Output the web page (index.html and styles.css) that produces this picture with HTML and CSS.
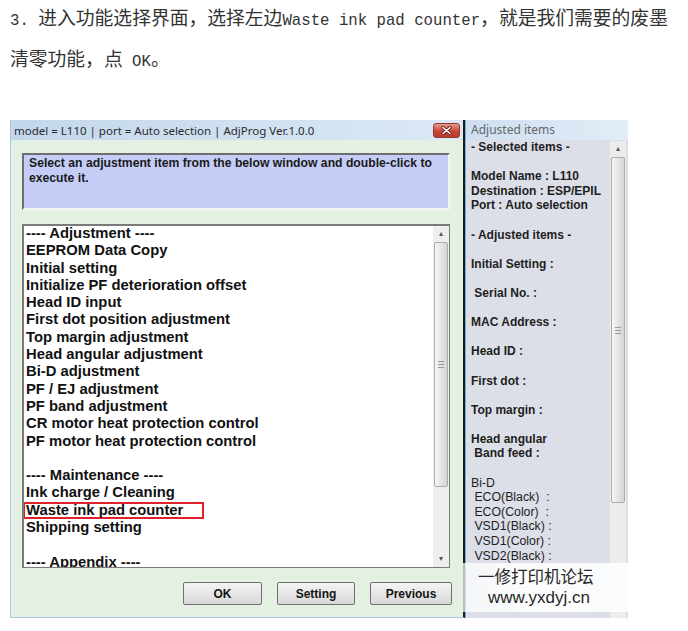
FILE: index.html
```html
<!DOCTYPE html>
<html lang="zh-CN">
<head>
    <meta charset="UTF-8">
    <meta name="viewport" content="width=device-width, initial-scale=1.0">
    <title>废墨清零</title>
    <link rel="stylesheet" href="styles.css">
</head>
<body>
    <p class="intro"><span class="mono">3. </span>进入功能选择界面，选择左边<span class="mono">Waste ink pad counter</span>，就是我们需要的废墨清零功能，点<span class="mono"> OK</span>。</p>

    <div class="shot">
        <div class="window">
            <div class="titlebar">
                <span>model = L110 | port = Auto selection | AdjProg Ver.1.0.0</span>
                <span class="close">
                    <svg width="11" height="9" viewBox="0 0 11 9"><path d="M2 1.5 L9 7.5 M9 1.5 L2 7.5" stroke="#6b1d14" stroke-width="3.2" stroke-linecap="round"/><path d="M2 1.5 L9 7.5 M9 1.5 L2 7.5" stroke="#fff" stroke-width="1.6" stroke-linecap="round"/></svg>
                </span>
            </div>
            <div class="win-body">
                <div class="hint">Select an adjustment item from the below window and double-click to execute it.</div>

                <div class="listbox">
                    <ul class="items">
                        <li>---- Adjustment ----</li>
                        <li>EEPROM Data Copy</li>
                        <li>Initial setting</li>
                        <li>Initialize PF deterioration offset</li>
                        <li>Head ID input</li>
                        <li>First dot position adjustment</li>
                        <li>Top margin adjustment</li>
                        <li>Head angular adjustment</li>
                        <li>Bi-D adjustment</li>
                        <li>PF / EJ adjustment</li>
                        <li>PF band adjustment</li>
                        <li>CR motor heat protection control</li>
                        <li>PF motor heat protection control</li>
                        <li>&nbsp;</li>
                        <li>---- Maintenance ----</li>
                        <li>Ink charge / Cleaning</li>
                        <li class="marked">Waste ink pad counter</li>
                        <li>Shipping setting</li>
                        <li>&nbsp;</li>
                        <li>---- Appendix ----</li>
                    </ul>
                    <div class="vscroll">
                        <div class="arrow">&#9652;</div>
                        <div class="thumb list-thumb"><span class="grip"></span></div>
                        <div class="track"></div>
                        <div class="arrow">&#9662;</div>
                    </div>
                </div>

                <div class="buttons">
                    <button class="btn btn-ok">OK</button>
                    <button class="btn btn-setting">Setting</button>
                    <button class="btn btn-prev">Previous</button>
                </div>
            </div>
        </div>

        <div class="side">
            <div class="side-title">Adjusted items</div>
            <div class="side-body">
<pre class="side-text">- Selected items -

Model Name : L110
Destination : ESP/EPIL
Port : Auto selection

- Adjusted items -

Initial Setting :

 Serial No. :

MAC Address :

Head ID :

First dot :

Top margin :

Head angular
 Band feed :

<span class="thin">Bi-D
 ECO(Black)  :
 ECO(Color)  :
 VSD1(Black) :
 VSD1(Color) :
 VSD2(Black) :</span></pre>
                <div class="vscroll side-scroll">
                    <div class="arrow">&#9652;</div>
                    <div class="thumb side-thumb"><span class="grip"></span></div>
                    <div class="track"></div>
                </div>
            </div>
            <div class="watermark">
                <div class="wm-name">一修打印机论坛</div>
                <div class="wm-url">www.yxdyj.cn</div>
            </div>
        </div>
    </div>
</body>
</html>
```

FILE: styles.css
```css
body { margin: 0; background: #fff; font-family: "Liberation Sans", Arial, sans-serif; }

.intro { margin: -4px 8px 0 10px; font: 18.8px/41px "Noto Sans CJK SC", sans-serif; color: #333; }
.mono { font-family: "Liberation Mono", monospace; font-size: 15.7px; line-height: 1; }

.shot { display: flex; margin: 42px 0 0 10px; width: 618px; height: 498px; }

/* left dialog */
.window { width: 452px; display: flex; flex-direction: column; background: #e3f0e2; border-left: 1px solid #a9c6e2; border-bottom: 1px solid #a9c6e2; border-right: 2px solid #1c1c1c; }
.titlebar { height: 20px; display: flex; align-items: center; justify-content: space-between; padding: 0 3px 0 3px; background: linear-gradient(to right, #c3d7ec, #dce9f5); font: 11.5px "Noto Sans", sans-serif; color: #2b2b2b; }
.close { width: 25px; height: 13px; display: flex; align-items: center; justify-content: center; border: 1px solid #8e3a30; border-radius: 3px; background: linear-gradient(#e49a8c, #c9473a 55%, #b8382c); }

.win-body { padding: 13px 0 0 11px; }
.hint { width: 428px; height: 57px; box-sizing: border-box; padding: 1px 5px; border: 2px solid; border-color: #6e6e6e #f3f3f3 #f3f3f3 #6e6e6e; background: #c5cdf6; font-weight: bold; font-size: 12.2px; line-height: 15px; color: #1a1a1a; }

.listbox { width: 428px; height: 344px; box-sizing: border-box; margin-top: 14px; display: flex; background: #fff; border: 1px solid #7a7a7a; border-top-width: 2px; border-left-width: 2px; overflow: hidden; }
.items { flex: 1; margin: -1px 0 0; padding: 0 0 0 2px; list-style: none; font-weight: bold; font-size: 14.8px; line-height: 17.3px; color: #111; white-space: nowrap; }
.items .marked { width: 178px; margin-left: -3px; padding-left: 3px; box-shadow: inset 0 0 0 2px #e0202a; }

.vscroll { width: 16px; display: flex; flex-direction: column; background: #eeeeee; }
.vscroll .arrow { height: 16px; font-size: 8px; line-height: 16px; text-align: center; color: #555; }
.vscroll .track { flex: 1; }
.thumb { margin: 0 1px; display: flex; align-items: center; justify-content: center; border: 1px solid #acacac; border-radius: 2px; background: linear-gradient(to right, #f6f6f6, #e2e2e2 60%, #d4d4d4); }
.list-thumb { height: 243px; }
.grip { width: 6px; height: 5px; border-top: 1px solid #9a9a9a; border-bottom: 1px solid #9a9a9a; position: relative; }
.grip::after { content: ""; position: absolute; left: 0; right: 0; top: 2px; border-top: 1px solid #9a9a9a; }

.buttons { width: 430px; margin-top: 14px; display: flex; justify-content: flex-end; gap: 15px; }
.btn { height: 23px; padding: 0; border: 1px solid #707070; border-radius: 2px; background: linear-gradient(#f4f4f4, #e6e6e6 50%, #d8d8d8); font: bold 12px "Liberation Sans", Arial, sans-serif; color: #141414; }
.btn-ok { width: 79px; }
.btn-setting { width: 78px; }
.btn-prev { width: 82px; }

/* right panel */
.side { width: 162px; position: relative; display: flex; flex-direction: column; border-left: 1px solid #6fb0da; }
.side-title { height: 20px; padding-left: 5px; background: linear-gradient(to right, #cddff0, #e2edf7); font: 12px/20px "Noto Sans", sans-serif; color: #666; }
.side-body { flex: 1; display: flex; background: #dcdfe8; overflow: hidden; }
.side-text { flex: 1; margin: 0; padding-left: 5px; font: bold 12px/14.6px "Liberation Sans", Arial, sans-serif; color: #1e1e1e; overflow: hidden; }
.side-text .thin { font-weight: normal; font-size: 12.3px; }
.side-scroll { margin: 1px 2px 0 0; background: #ececec; }
.side-thumb { height: 344px; }

.watermark { position: absolute; left: -3px; top: 443px; width: 165px; height: 49px; background: linear-gradient(to right, rgba(255,255,255,0.7), rgba(255,255,255,0.9) 40%, rgba(255,255,255,0.85)); color: #262626; }
.wm-name { padding: 2px 0 0 15px; font: 16.5px/22px "Noto Sans CJK SC", sans-serif; }
.wm-url { padding-left: 25px; font: 17px/22px "Liberation Sans", Arial, sans-serif; }
```
